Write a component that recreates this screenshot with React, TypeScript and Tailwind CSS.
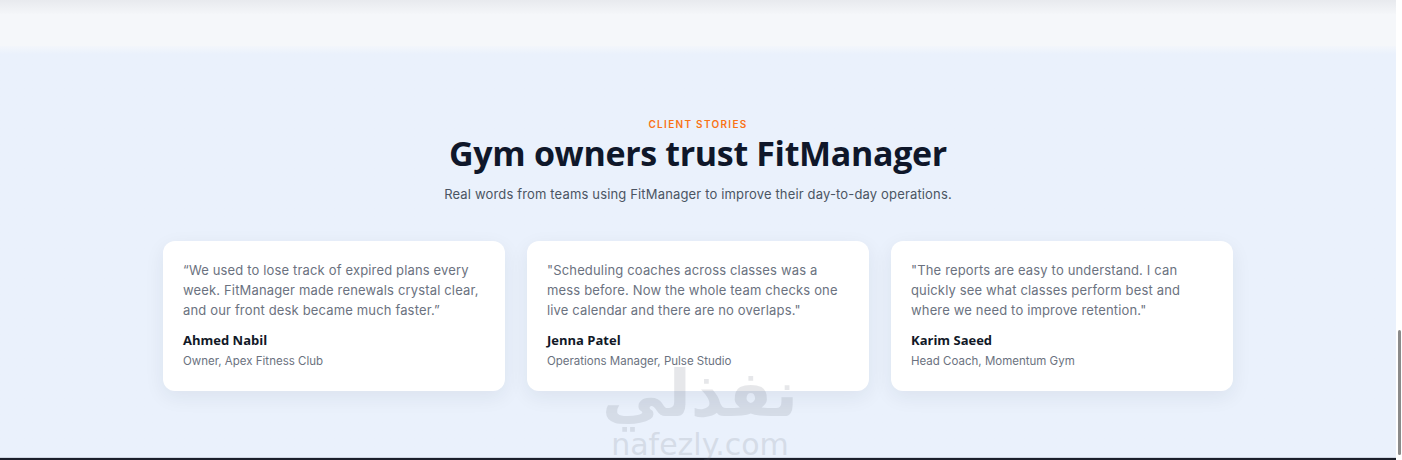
const stories = [
  {
    quote: '“We used to lose track of expired plans every week. FitManager made renewals crystal clear, and our front desk became much faster.”',
    name: 'Ahmed Nabil',
    role: 'Owner, Apex Fitness Club',
  },
  {
    quote: '"Scheduling coaches across classes was a mess before. Now the whole team checks one live calendar and there are no overlaps."',
    name: 'Jenna Patel',
    role: 'Operations Manager, Pulse Studio',
  },
  {
    quote: '"The reports are easy to understand. I can quickly see what classes perform best and where we need to improve retention."',
    name: 'Karim Saeed',
    role: 'Head Coach, Momentum Gym',
  },
];

const body = { fontFamily: 'Inter, "Liberation Sans", sans-serif' };
const display = { fontFamily: '"Open Sans", Inter, "Liberation Sans", sans-serif' };

function StoryCard({ quote, name, role }: { quote: string; name: string; role: string }) {
  return (
    <div className="w-[342px] rounded-xl bg-white px-5 pt-[19px] pb-[22px] shadow-[0_6px_20px_rgba(30,41,59,0.07)]">
      <p className="text-[13px] leading-5 tracking-[0.012em] text-[#6b7280]">{quote}</p>
      <p className="mt-[10px] text-[13px] leading-5 font-bold text-[#111827]" style={display}>{name}</p>
      <p className="mt-[3px] text-[11.5px] leading-4 text-[#6b7280]">{role}</p>
    </div>
  );
}

export default function App() {
  return (
    <div className="flex h-[460px] w-[1402px] overflow-hidden bg-white" style={body}>
      <div className="relative flex w-[1396px] flex-col">
        {/* bottom of previous section */}
        <div className="h-[46px] bg-[#f5f7fa]">
          <div className="h-[14px] bg-gradient-to-b from-[#e8eaee] to-[#f4f6f9]" />
        </div>

        {/* testimonials */}
        <section className="flex flex-1 flex-col items-center bg-gradient-to-b from-[#f3f6fb] from-0% to-[#eaf1fc] to-[2%] pt-[70px]">
          <p className="text-[10px] leading-4 font-semibold tracking-[0.13em] text-[#f97316]">CLIENT STORIES</p>
          <h2 className="-mt-[1px] text-[34px] leading-[44px] font-bold tracking-[-0.01em] text-[#0f172a]" style={display}>
            Gym owners trust FitManager
          </h2>
          <p className="mt-[9px] text-[13px] leading-5 tracking-[0.012em] text-[#4b5563]">
            Real words from teams using FitManager to improve their day-to-day operations.
          </p>
          <div className="mt-[37px] flex gap-[22px]">
            {stories.map((s) => (
              <StoryCard key={s.name} {...s} />
            ))}
          </div>
        </section>

        <div className="h-[3px] border-t border-[#cfd6e2] bg-[#1b1f2b]" />

        {/* watermark */}
        <div className="pointer-events-none absolute left-[600px] top-[362px] flex w-[200px] flex-col items-center opacity-[0.16]">
          <span className="text-[64px] leading-[64px] font-bold text-[#6b7280]" style={{ fontFamily: '"DejaVu Sans", sans-serif' }}>نفذلي</span>
          <span className="mt-[2px] text-[30px] leading-[34px] text-[#6b7280]" style={{ fontFamily: '"DejaVu Sans", sans-serif' }}>nafezly.com</span>
        </div>
      </div>

      {/* scrollbar */}
      <div className="relative w-[6px] bg-white">
        <div className="absolute left-[2px] top-[330px] h-[125px] w-[3px] rounded-full bg-[#8a8a8a]" />
      </div>
    </div>
  );
}
